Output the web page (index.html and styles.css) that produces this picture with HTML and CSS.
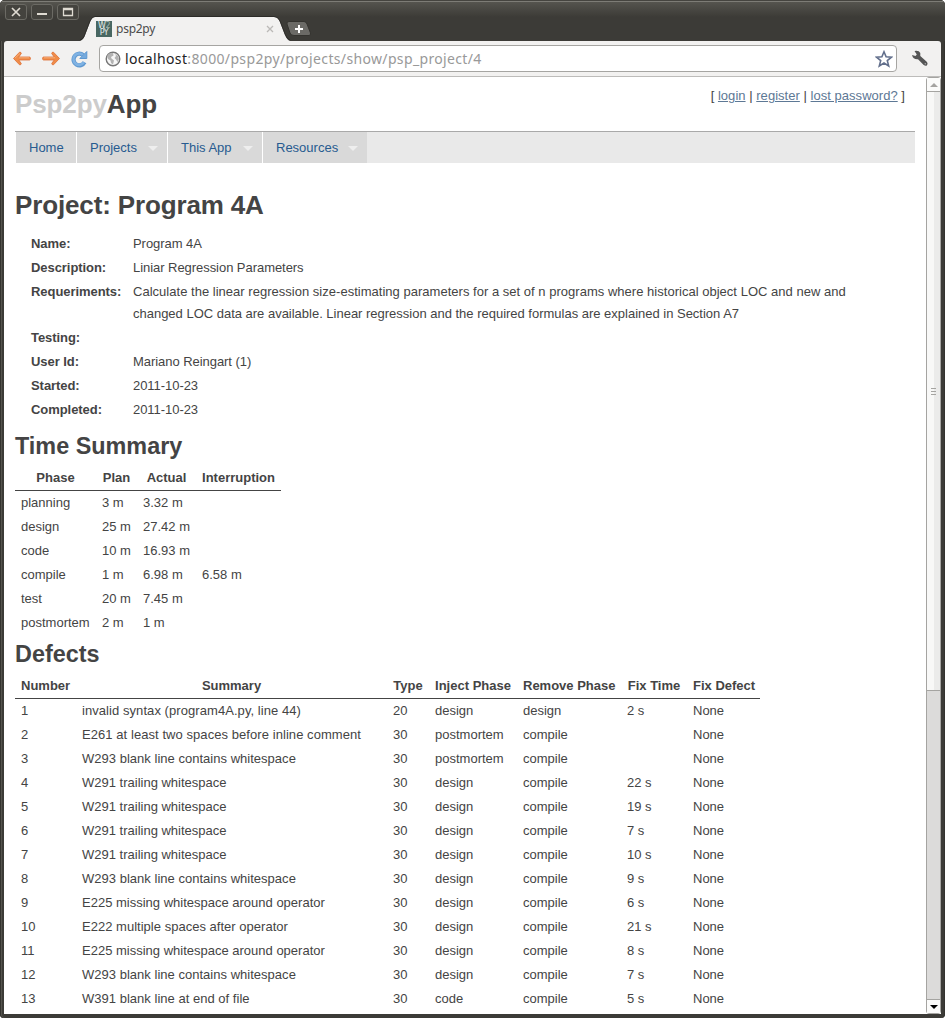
FILE: index.html
```html
<!DOCTYPE html>
<html lang="en">
<head>
<meta charset="utf-8">
<title>psp2py</title>
<link rel="stylesheet" href="styles.css">
</head>
<body>
<div class="window">
  <header class="titlebar">
    <div class="controls">
      <span class="control"><svg width="22" height="16" viewBox="0 0 22 16"><path d="M7 4l8 8M15 4l-8 8" stroke="#dfdbd2" stroke-width="1.7"/></svg></span>
      <span class="control"><svg width="22" height="16" viewBox="0 0 22 16"><path d="M6 10h10" stroke="#dfdbd2" stroke-width="2"/></svg></span>
      <span class="control"><svg width="22" height="16" viewBox="0 0 22 16"><path d="M6.500 4.500h9v7h-9zM6.500 5.500h9" fill="none" stroke="#dfdbd2" stroke-width="1.3"/></svg></span>
    </div>
    <div class="tab">
      <svg class="tab-shape" width="212" height="25" viewBox="0 0 212 25"><path d="M0 25C3 24 4 22 5 19L10 6Q12 1 15 1H194Q198 1 200 6L205 19Q207 24 210 25Z" fill="#f2f1f0"/><path d="M0 24C3 23 4 21 5 18L10 5Q12 .5 15 .5H194Q198 .5 200 5L205 18Q207 23 210 24" fill="none" stroke="#282724" stroke-width=".8"/></svg>
      <div class="favicon"><span>W<i>2</i></span><span>PY</span></div>
      <span class="tab-title">psp2py</span>
      <svg class="tab-close" width="8" height="8" viewBox="0 0 8 8"><path d="M1 1l6 6M7 1L1 7" stroke="#bbb9b7" stroke-width="1.3"/></svg>
    </div>
    <svg class="new-tab" width="26" height="16" viewBox="0 0 26 16"><path d="M3 .5H18Q20 .5 21 3L24.500 12Q25 14.500 23 14.500H8Q5 14.500 4 12L1 3Q.5.5 3 .5Z" fill="#6b6a66" stroke="#34332f"/><path d="M9 8h8M13 4v8" stroke="#fff" stroke-width="2"/></svg>
  </header>
  <div class="toolbar">
    <svg class="tool" width="20" height="18" viewBox="0 0 20 18"><path d="M1.500 8.500L7.500 2.200Q9 1.800 9.300 3.500L6.800 7H17.500Q18.500 7.200 18.500 8.500T17.500 10H6.800L9.300 13.500Q9 15.200 7.500 14.800Z" fill="#f08c48" stroke="#dd6f35" stroke-width=".8" stroke-linejoin="round"/><path d="M3 8L8 3.500M7 7.800H17" stroke="#f9b784" stroke-width=".8"/></svg>
    <svg class="tool" width="20" height="18" viewBox="0 0 20 18"><path d="M18.500 8.500L12.500 2.200Q11 1.800 10.700 3.500L13.200 7H2.500Q1.500 7.200 1.500 8.500T2.500 10H13.200L10.700 13.500Q11 15.200 12.500 14.800Z" fill="#f08c48" stroke="#dd6f35" stroke-width=".8" stroke-linejoin="round"/><path d="M3 7.800H14" stroke="#f9b784" stroke-width=".8"/></svg>
    <svg class="tool" width="20" height="18" viewBox="0 0 20 18"><path d="M14.500 12.200A5.800 5.800 0 1 1 13 5" fill="none" stroke="#5f98d0" stroke-width="4.200"/><path d="M14 12.200A5.700 5.700 0 1 1 13 5" fill="none" stroke="#7fb2e3" stroke-width="2.500"/><path d="M16.800 1.500V8.500H9.800Z" fill="#75aade" stroke="#5f98d0"/></svg>
    <div class="address">
      <svg width="16" height="16" viewBox="0 0 16 16"><circle cx="8" cy="8" r="6.800" fill="#f6f6f6" stroke="#777" stroke-width="1.400"/><path d="M2 5L4 2.500L8 2L8.500 4.500L6 6L6.500 7.500L9 9.500L8 13.500L6 12L5.500 9.500L3 8ZM10 3L13 5L14 8L12.500 11L11 8.500L9.500 7L11 5Z" fill="#b2b2b2"/></svg>
      <span class="url"><b>localhost</b>:8000/psp2py/projects/show/psp_project/4</span>
      <svg class="star" width="18" height="18" viewBox="0 0 18 18"><path d="M9 1.800L11.100 6.800L16.500 7.100L12.300 10.600L13.700 16L9 13L4.300 16L5.700 10.600L1.500 7.100L6.900 6.800Z" fill="#fff" stroke="#626f8c" stroke-width="1.600"/></svg>
    </div>
    <svg class="wrench" width="18" height="17" viewBox="0 0 18 17"><path d="M3.500 1Q8 .2 9.300 3L9.300 6L16 12Q17.200 14 16 15.200T12.700 15L7 9.300Q2.200 9.800 1 5L4.500 6L5.800 4.500Z" fill="#555"/><circle cx="14.300" cy="13.700" r=".8" fill="#aaa"/></svg>
  </div>
  <div class="viewport">
    <main class="page">
      <div class="masthead">
        <div class="logo"><span>Psp2py</span>App</div>
        <div class="auth">[ <a>login</a> | <a>register</a> | <a>lost password?</a> ]</div>
      </div>
      <nav class="menu"><a class="home">Home</a><a class="drop projects">Projects</a><a class="drop app">This App</a><a class="drop resources">Resources</a></nav>
      <h1>Project: Program 4A</h1>
      <table class="info">
        <tr><th>Name:</th><td>Program 4A</td></tr>
        <tr><th>Description:</th><td>Liniar Regression Parameters</td></tr>
        <tr><th>Requeriments:</th><td><span class="loose">Calculate the linear regression size-estimating parameters for a set of n programs where historical object LOC and new and</span><br>changed LOC data are available. Linear regression and the required formulas are explained in Section A7</td></tr>
        <tr><th>Testing:</th><td></td></tr>
        <tr><th>User Id:</th><td>Mariano Reingart (1)</td></tr>
        <tr><th>Started:</th><td>2011-10-23</td></tr>
        <tr><th>Completed:</th><td>2011-10-23</td></tr>
      </table>
      <h2>Time Summary</h2>
      <table class="grid time">
        <colgroup><col class="w81"><col class="w41"><col class="w59"><col class="w85"></colgroup>
        <thead><tr><th>Phase</th><th>Plan</th><th>Actual</th><th>Interruption</th></tr></thead>
        <tbody>
        <tr><td>planning</td><td>3 m</td><td>3.32 m</td><td></td></tr>
        <tr><td>design</td><td>25 m</td><td>27.42 m</td><td></td></tr>
        <tr><td>code</td><td>10 m</td><td>16.93 m</td><td></td></tr>
        <tr><td>compile</td><td>1 m</td><td>6.98 m</td><td>6.58 m</td></tr>
        <tr><td>test</td><td>20 m</td><td>7.45 m</td><td></td></tr>
        <tr><td>postmortem</td><td>2 m</td><td>1 m</td><td></td></tr>
        </tbody>
      </table>
      <h2>Defects</h2>
      <table class="grid defects">
        <colgroup><col class="w61"><col class="w311"><col class="w42"><col class="w88"><col class="w104"><col class="w66"><col class="w73"></colgroup>
        <thead><tr><th>Number</th><th>Summary</th><th>Type</th><th>Inject Phase</th><th>Remove Phase</th><th>Fix Time</th><th>Fix Defect</th></tr></thead>
        <tbody>
        <tr><td>1</td><td class="wide">invalid syntax (program4A.py, line 44)</td><td>20</td><td>design</td><td>design</td><td>2 s</td><td>None</td></tr>
        <tr><td>2</td><td class="wide">E261 at least two spaces before inline comment</td><td>30</td><td>postmortem</td><td>compile</td><td></td><td>None</td></tr>
        <tr><td>3</td><td class="loose">W293 blank line contains whitespace</td><td>30</td><td>postmortem</td><td>compile</td><td></td><td>None</td></tr>
        <tr><td>4</td><td>W291 trailing whitespace</td><td>30</td><td>design</td><td>compile</td><td>22 s</td><td>None</td></tr>
        <tr><td>5</td><td>W291 trailing whitespace</td><td>30</td><td>design</td><td>compile</td><td>19 s</td><td>None</td></tr>
        <tr><td>6</td><td>W291 trailing whitespace</td><td>30</td><td>design</td><td>compile</td><td>7 s</td><td>None</td></tr>
        <tr><td>7</td><td>W291 trailing whitespace</td><td>30</td><td>design</td><td>compile</td><td>10 s</td><td>None</td></tr>
        <tr><td>8</td><td class="loose">W293 blank line contains whitespace</td><td>30</td><td>design</td><td>compile</td><td>9 s</td><td>None</td></tr>
        <tr><td>9</td><td>E225 missing whitespace around operator</td><td>30</td><td>design</td><td>compile</td><td>6 s</td><td>None</td></tr>
        <tr><td>10</td><td class="loose">E222 multiple spaces after operator</td><td>30</td><td>design</td><td>compile</td><td>21 s</td><td>None</td></tr>
        <tr><td>11</td><td>E225 missing whitespace around operator</td><td>30</td><td>design</td><td>compile</td><td>8 s</td><td>None</td></tr>
        <tr><td>12</td><td class="loose">W293 blank line contains whitespace</td><td>30</td><td>design</td><td>compile</td><td>7 s</td><td>None</td></tr>
        <tr><td>13</td><td class="loose">W391 blank line at end of file</td><td>30</td><td>code</td><td>compile</td><td>5 s</td><td>None</td></tr>
        </tbody>
      </table>
    </main>
    <aside class="scrollbar">
      <div class="arrow up"></div>
      <div class="thumb"><i></i><i></i><i></i></div>
      <div class="track"></div>
      <div class="arrow down"></div>
    </aside>
  </div>
</div>
</body>
</html>
```
FILE: styles.css
```css
* { box-sizing: border-box; }
body { margin: 0; background: #fff; font: 13px/22px "Liberation Sans", Arial, sans-serif; color: #444; }
svg { display: block; flex: none; }
.window { width: 945px; height: 1018px; display: flex; flex-direction: column; padding: 0 4px 4px; background: #3c3b37; border-radius: 5px 5px 4px 4px; overflow: hidden; box-shadow: inset 1px 0 #34332f, inset 2px 0 #55544e, inset -1px 0 #34332f; }
.titlebar { height: 41px; margin: 0 -4px; padding-left: 5px; display: flex; flex: none; background: linear-gradient(#45443f 0, #45443f 1px, #7d7c76 1px, #7d7c76 2px, #55544e 2px, #3c3b37 17px); }
.controls { display: flex; gap: 4px; padding-top: 4px; width: 76px; flex: none; }
.control { width: 22px; height: 16px; border: 1px solid #6b6a64; border-radius: 3px; background: #44433e; flex: none; }
.control svg { margin: -1px; }
.tab { display: flex; align-items: center; position: relative; width: 212px; height: 25px; margin: 16px 0 0 -1px; padding: 0 18px 0 16px; flex: none; }
.tab-shape { position: absolute; left: 0; top: 0; }
.favicon { position: relative; width: 16px; height: 16px; background: #486762; color: #e6ecea; font: 8px/7px "DejaVu Sans", sans-serif; letter-spacing: -.4px; text-align: center; display: flex; flex-direction: column; padding-top: 1px; }
.favicon i { color: #a2b5b1; font-style: normal; }
.tab-title { position: relative; margin-left: 4px; font: 12px/16px "Noto Sans", sans-serif; color: #4c4c4c; letter-spacing: -.25px; flex: 1; }
.tab-close { position: relative; }
.new-tab { margin: 21px 0 0 -6px; }
.toolbar { height: 36px; background: #f2f1f0; border-bottom: 1px solid #bdbcba; border-radius: 3px 3px 0 0; display: flex; align-items: center; padding-left: 8px; flex: none; }
.tool { margin-right: 9px; }
.address { width: 798px; height: 27px; border: 1px solid #a6a5a2; border-radius: 4px; background: #fff; display: flex; align-items: center; padding: 0 3px 0 5px; flex: none; }
.url { flex: 1; margin-left: 4px; font: 14px/24px "Noto Sans", sans-serif; letter-spacing: .35px; color: #999; white-space: nowrap; }
.url b { font-weight: normal; color: #222; }
.wrench { margin-left: 14px; }
.viewport { flex: 1; display: flex; min-height: 0; background: #fff; }
.page { width: 922px; padding: 0 11px; overflow: hidden; flex: none; }
.masthead { display: flex; justify-content: space-between; height: 54px; }
.logo { font: bold 26px/30px "Liberation Sans", sans-serif; letter-spacing: -.12px; padding-top: 12px; }
.logo span { color: #ccc; }
.auth { padding: 8px 10px 0 0; letter-spacing: .03px; }
.auth a { color: #5d7895; text-decoration: underline; }
.menu { display: flex; gap: 1px; height: 32px; border-top: 1px solid #a9a9a9; padding-left: 1px; background: linear-gradient(90deg, #fff 352px, #e9e9e9 352px); }
.menu a { background: #d9d9d9; color: #275b90; padding: 5px 0 4px 13px; white-space: nowrap; }
.menu .home { width: 60px; }
.menu .projects { width: 90px; }
.menu .app { width: 94px; }
.menu .resources { width: 104px; }
.menu .drop { display: flex; align-items: center; justify-content: space-between; padding-right: 9px; }
.drop::after { content: ""; border: 5px solid transparent; border-top-color: #eee; border-bottom: 0; }
h1 { margin: 27px 0 11px; font-size: 26px; line-height: 31px; letter-spacing: -.14px; }
h2 { margin: 0; font-size: 23.4px; line-height: 39px; }
table { border-collapse: collapse; border-spacing: 0; }
th, td { padding: 1px 6px; height: 24px; vertical-align: top; white-space: nowrap; }
td { text-align: left; }
.info { margin: 0 0 5px 16px; }
.info th { width: 102px; text-align: left; padding: 1px 0; letter-spacing: -.06px; }
.info td { padding: 1px 0; letter-spacing: -.05px; }
.info td:has(br) { letter-spacing: -.01px; }
.loose, .info .loose { letter-spacing: .02px; }
.wide { letter-spacing: .065px; }
.grid { table-layout: fixed; border-collapse: separate; }
.grid thead th { height: 25px; border-bottom: 1px solid #444; text-align: center; }
.time { width: 266px; }
.defects { width: 745px; }
.w81 { width: 81px; } .w41 { width: 41px; } .w59 { width: 59px; } .w85 { width: 85px; }
.w61 { width: 61px; } .w311 { width: 311px; } .w42 { width: 42px; } .w88 { width: 88px; }
.w104 { width: 104px; } .w66 { width: 66px; } .w73 { width: 73px; }
.scrollbar { width: 15px; display: flex; flex-direction: column; border: 1px solid #a5a4a1; border-radius: 3px; background: #dcdbda; }
.arrow { height: 14px; background: #fbfbfa; display: flex; align-items: center; justify-content: center; flex: none; }
.up { border-bottom: 1px solid #a5a4a1; }
.down { border-top: 1px solid #a5a4a1; }
.arrow::after { content: ""; border: 4px solid transparent; }
.up::after { border-bottom-color: #a5a4a1; border-top: 0; }
.down::after { border-top-color: #000; border-bottom: 0; }
.thumb { height: 599px; background: linear-gradient(90deg, #f8f8f7 50%, #ebebea 50%); border-bottom: 1px solid #a5a4a1; display: flex; flex-direction: column; gap: 2px; align-items: center; justify-content: center; flex: none; }
.thumb i { width: 5px; height: 1px; background: #a5a4a1; }
.track { flex: 1; }
```
